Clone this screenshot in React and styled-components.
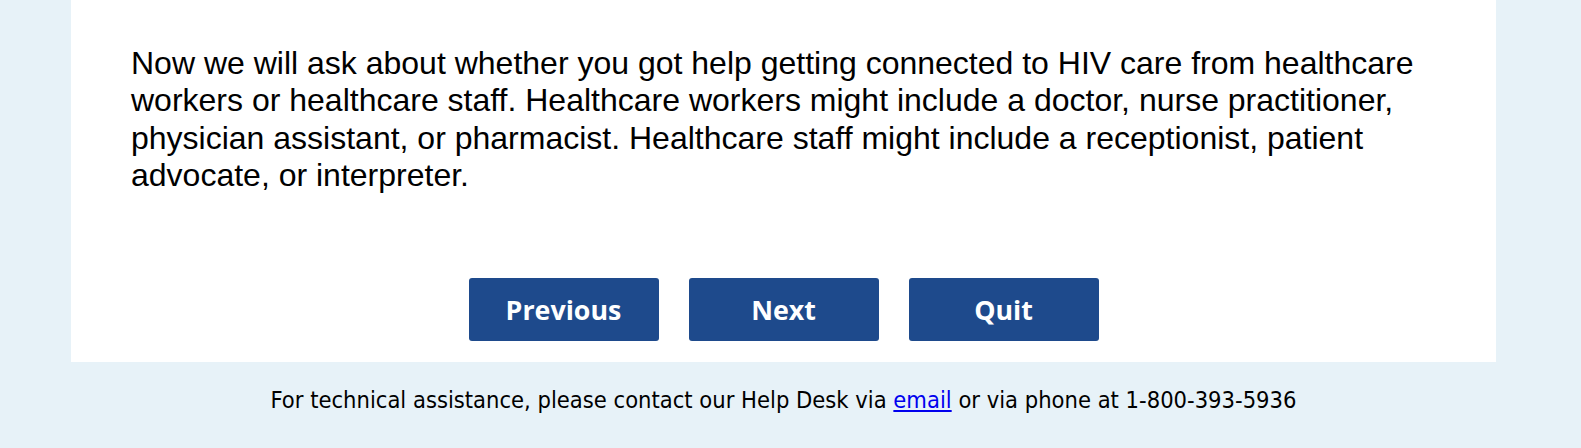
import React from 'react';
import styled, { createGlobalStyle } from 'styled-components';

const GlobalStyle = createGlobalStyle`
  html, body {
    margin: 0;
    padding: 0;
    background: #e7f2f8;
  }
`;

const Page = styled.div`
  width: 1425px;
  margin-left: 71px;
`;

const Panel = styled.main`
  background: #ffffff;
  padding: 45px 60px 21px 60px;
`;

const Intro = styled.p`
  margin: 0;
  font-family: "Liberation Sans", Arial, sans-serif;
  font-size: 32px;
  line-height: 37.3px;
  color: #000;
`;

const ButtonRow = styled.div`
  display: flex;
  justify-content: center;
  gap: 30px;
  margin-top: 84px;
`;

const NavButton = styled.button`
  width: 190px;
  height: 63px;
  border: none;
  border-radius: 3px;
  background: #1e4a8c;
  color: #ffffff;
  font-family: "Open Sans", sans-serif;
  font-weight: 700;
  font-size: 26.8px;
  cursor: pointer;
  padding: 0;
`;

const Footer = styled.footer`
  text-align: center;
  padding-top: 24px;
  font-family: "DejaVu Sans Condensed", "DejaVu Sans", sans-serif;
  font-size: 23.5px;
  color: #000;
`;

const HelpLink = styled.a`
  color: #0000ee;
  text-decoration: underline;
`;

export default function App() {
  return (
    <>
      <GlobalStyle />
      <Page>
        <Panel>
          <Intro>
            Now we will ask about whether you got help getting connected to HIV care from healthcare
            workers or healthcare staff. Healthcare workers might include a doctor, nurse practitioner,
            physician assistant, or pharmacist. Healthcare staff might include a receptionist, patient
            advocate, or interpreter.
          </Intro>
          <ButtonRow>
            <NavButton type="button">Previous</NavButton>
            <NavButton type="button">Next</NavButton>
            <NavButton type="button">Quit</NavButton>
          </ButtonRow>
        </Panel>
        <Footer>
          For technical assistance, please contact our Help Desk via{' '}
          <HelpLink href="#">email</HelpLink> or via phone at 1-800-393-5936
        </Footer>
      </Page>
    </>
  );
}
